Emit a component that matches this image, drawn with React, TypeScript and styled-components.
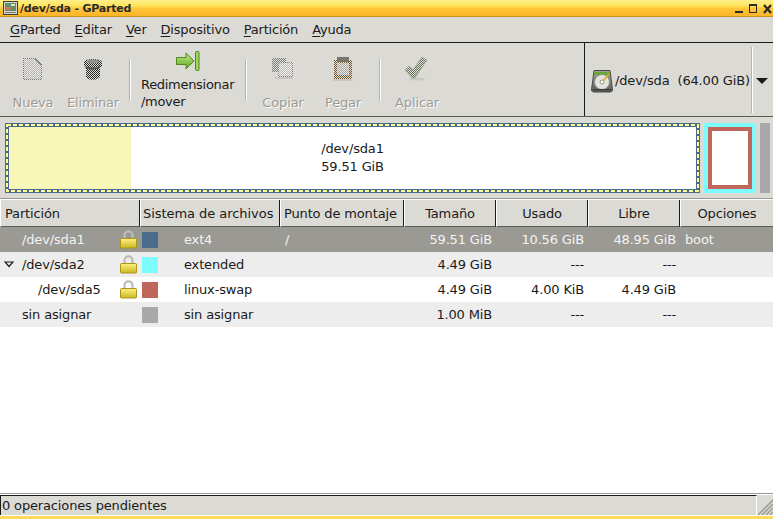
import styled, { createGlobalStyle } from "styled-components"

const Global = createGlobalStyle`
  html, body {
    margin: 0;
    padding: 0;
    background: #fff;
  }
  body {
    font-family: "DejaVu Sans", sans-serif;
    font-size: 13px;
    letter-spacing: -0.15px;
    color: #1a1a1a;
  }
`

const Window = styled.div`
  width: 773px;
  height: 519px;
  display: flex;
  flex-direction: column;
  overflow: hidden;
  background: #fff;
`

const TitleBar = styled.div`
  height: 16px;
  flex: none;
  display: flex;
  align-items: center;
  padding: 0 1px 0 3px;
  background: linear-gradient(#ffef8a 0, #ffe45a 6px, #ffc83c 8px, #fdb52b 15px);
  border-bottom: 1px solid #c89220;
  color: #2a2a2a;
  font-size: 11px;
  letter-spacing: -0.2px;
  font-weight: 700;
`

const TitleText = styled.span`
  margin-left: 2px;
  flex: 1;
`

const WindowButtons = styled.div`
  display: flex;
  align-items: center;
  gap: 5px;
  padding-top: 1px;
`

const MenuBar = styled.div`
  height: 25px;
  flex: none;
  display: flex;
  align-items: center;
  gap: 14px;
  padding: 0 0 0 10px;
  background: #dcdad5;
  border-bottom: 1px solid #1a1a1a;
  box-sizing: content-box;
  letter-spacing: -0.2px;
  u {
    text-underline-offset: 2px;
  }
`

const Toolbar = styled.div`
  height: 73px;
  flex: none;
  display: flex;
  background: #dcdad5;
  border-bottom: 1px solid #5a5a57;
  padding-left: 3px;
`

const Tools = styled.div`
  flex: 1;
  display: flex;
  align-items: stretch;
`

const ToolButton = styled.div<{ $wide?: boolean; $off?: boolean }>`
  width: ${(p) => (p.$wide ? 102 : 60)}px;
  display: flex;
  flex-direction: column;
  align-items: ${(p) => (p.$wide ? "flex-start" : "center")};
  padding: ${(p) => (p.$wide ? "8px 0 0 4px" : "14px 0 0")};
  box-sizing: border-box;
  color: ${(p) => (p.$off ? "#9a9a96" : "#1a1a1a")};
  text-shadow: ${(p) => (p.$off ? "1px 1px 0 #fff" : "none")};
`

const ToolIcon = styled.div<{ $wide?: boolean }>`
  height: 24px;
  margin-left: ${(p) => (p.$wide ? "35px" : "0")};
  flex: none;
`

const ToolLabel = styled.div<{ $wide?: boolean }>`
  margin-top: ${(p) => (p.$wide ? "1px" : "13px")};
  line-height: 17px;
  letter-spacing: ${(p) => (p.$wide ? "-0.3px" : "-0.15px")};
`

const ToolSep = styled.div`
  width: 14px;
  display: flex;
  padding: 16px 0 15px 6px;
  box-sizing: border-box;
  &::before {
    content: "";
    width: 1px;
    background: #b5b3ae;
    box-shadow: 1px 0 0 #fff;
  }
`

const DeviceCombo = styled.div`
  width: 189px;
  flex: none;
  display: flex;
  align-items: center;
  border-left: 1px solid #1a1a1a;
  box-sizing: border-box;
  padding-left: 6px;
  white-space: pre;
`

const DiskWrap = styled.div`
  margin-top: 3px;
  line-height: 0;
`

const DeviceName = styled.span`
  margin: 2px 0 0 2px;
  width: 135px;
`

const DeviceSep = styled.div`
  width: 1px;
  height: 66px;
  background: #b5b3ae;
  box-shadow: 1px 0 0 #fff;
  margin-left: 1px;
`

const ArrowDown = styled.div`
  width: 0;
  height: 0;
  margin: 3px 0 0 4px;
  border-left: 6px solid transparent;
  border-right: 6px solid transparent;
  border-top: 6px solid #1a1a1a;
`

const MapArea = styled.div`
  height: 82px;
  flex: none;
  display: flex;
  gap: 4px;
  padding: 6px 3px 5px 5px;
  box-sizing: border-box;
  background: #dcdad5;
  border-bottom: 1px solid #9a9994;
`

const PrimaryPart = styled.div`
  position: relative;
  width: 695px;
  height: 70px;
  box-sizing: border-box;
  border: 4px solid #4b6b8a;
  background: #fff;
  display: flex;
`

const SelectionDash = styled.svg`
  position: absolute;
  left: -4px;
  top: -4px;
`

const UsedFill = styled.div`
  width: 122px;
  background: #f7f7b8;
`

const PartLabel = styled.div`
  flex: 1;
  display: flex;
  flex-direction: column;
  align-items: center;
  justify-content: center;
  padding-right: 122px;
  line-height: 18px;
`

const ExtendedPart = styled.div`
  width: 52px;
  height: 70px;
  box-sizing: border-box;
  border: 4px solid #7dfcfe;
  display: flex;
`

const SwapPart = styled.div`
  flex: 1;
  border: 4px solid #c1665a;
  background: #fff;
`

const FreePart = styled.div`
  width: 10px;
  height: 70px;
  background: #a9a9a9;
`

const cols = "140px 140px 124px 92px 92px 92px 1fr"

const HeaderRow = styled.div`
  height: 28px;
  flex: none;
  display: grid;
  grid-template-columns: ${cols};
  background: #fff;
  padding-top: 1px;
  box-sizing: border-box;
`

const HeaderCell = styled.div<{ $center?: boolean }>`
  display: flex;
  align-items: center;
  justify-content: ${(p) => (p.$center ? "center" : "flex-start")};
  padding: 0 3px 0 3px;
  background: #dcdad5;
  border-left: 1px solid #fff;
  border-right: 1px solid #1a1a1a;
  border-bottom: 1px solid #5a5a57;
  box-sizing: border-box;
  white-space: nowrap;
  overflow: hidden;
  &:first-child {
    padding-left: 4px;
  }
  &:nth-child(2) {
    padding-left: 2px;
    letter-spacing: -0.05px;
  }
  &:last-child {
    border-right: none;
  }
`

const Rows = styled.div`
  flex: 1;
  background: #fff;
`

const Row = styled.div<{ $tone: "selected" | "odd" | "even" }>`
  height: 25px;
  display: grid;
  grid-template-columns: ${cols};
  align-items: center;
  background: ${(p) =>
    p.$tone === "selected" ? "#9a9994" : p.$tone === "odd" ? "#ededed" : "#fff"};
  color: ${(p) => (p.$tone === "selected" ? "#f4f4f2" : "#1a1a1a")};
`

const NameCell = styled.div<{ $depth?: number }>`
  position: relative;
  display: flex;
  align-items: center;
  height: 25px;
  padding-left: ${(p) => (p.$depth ? 38 : 22)}px;
`

const Expander = styled.div`
  position: absolute;
  left: 4px;
  top: 9px;
  line-height: 0;
`

const LockIcon = styled.div`
  position: absolute;
  left: 120px;
  top: 3px;
  line-height: 0;
`

const FsCell = styled.div`
  display: flex;
  align-items: center;
  padding-left: 2px;
`

const Swatch = styled.div<{ $color: string }>`
  width: 16px;
  height: 16px;
  flex: none;
  background: ${(p) => p.$color};
  margin-right: 26px;
`

const MountCell = styled.div`
  padding-left: 5px;
`

const NumCell = styled.div`
  text-align: right;
  padding-right: 4px;
`

const FlagCell = styled.div`
  padding-left: 5px;
`

const StatusBar = styled.div`
  height: 23px;
  flex: none;
  display: flex;
  background: #fff;
  border-top: 1px solid #9a9994;
  padding-top: 1px;
  box-sizing: border-box;
`

const StatusText = styled.div`
  flex: 1;
  background: #dcdad5;
  border-top: 1px solid #1a1a1a;
  border-left: 1px solid #1a1a1a;
  border-right: 1px solid #fff;
  padding-left: 1px;
  line-height: 19px;
  height: 20px;
  box-sizing: border-box;
`

const Grip = styled.div`
  width: 16px;
  height: 20px;
  background: #dcdad5;
  line-height: 0;
`

const BottomEdge = styled.div`
  height: 3px;
  flex: none;
  background: #ffd95a;
`

const Stipple = ({ id, color }: { id: string; color: string }) => (
  <pattern id={id} width="2" height="2" patternUnits="userSpaceOnUse">
    <rect width="2" height="2" fill="#e4e3df" />
    <rect width="1" height="1" fill={color} />
    <rect x="1" y="1" width="1" height="1" fill={color} />
  </pattern>
)

const NewIcon = () => (
  <svg width="22" height="24" viewBox="0 0 22 24" shapeRendering="crispEdges">
    <defs><Stipple id="st-new" color="#707070" /></defs>
    <path d="M1 1H14L20 7V23H1Z" fill="url(#st-new)" />
    <path d="M2 2H13L19 8V22H2Z" fill="#eeedea" fillOpacity=".55" />
    <path d="M13 2L19 8" stroke="#888" fill="none" />
  </svg>
)

const DeleteIcon = () => (
  <svg width="20" height="24" viewBox="0 0 20 24">
    <defs><Stipple id="st-del" color="#222" /></defs>
    <path d="M1 5C1 1 19 1 19 5V9L17 11V19C17 24 3 24 3 19V11L1 9Z" fill="url(#st-del)" />
    <ellipse cx="10" cy="4.500" rx="6" ry="2" fill="#8f8f8c" />
    <path d="M3 9C6 11 14 11 17 9V11C14 13 6 13 3 11Z" fill="#555" />
  </svg>
)

const CopyIcon = () => (
  <svg width="22" height="24" viewBox="0 0 22 24" shapeRendering="crispEdges">
    <defs><Stipple id="st-copy" color="#777" /></defs>
    <rect x="0" y="1" width="14" height="14" fill="url(#st-copy)" />
    <rect x="6" y="5" width="15" height="15" fill="#dcdad5" />
    <rect x="6" y="5" width="15" height="15" fill="url(#st-copy)" />
    <rect x="7" y="6" width="13" height="13" fill="#f0efec" fillOpacity=".6" />
    <rect x="3" y="20" width="18" height="2" fill="#c9c7c2" />
  </svg>
)

const PasteIcon = () => (
  <svg width="20" height="24" viewBox="0 0 20 24" shapeRendering="crispEdges">
    <defs>
      <Stipple id="st-paste" color="#6e4f24" />
      <Stipple id="st-sheet" color="#a9a9a6" />
    </defs>
    <rect x="1" y="3" width="18" height="19" fill="url(#st-paste)" />
    <rect x="4" y="0" width="12" height="5" fill="#77756f" />
    <rect x="4" y="6" width="12" height="12" fill="url(#st-sheet)" />
    <rect x="0" y="22" width="20" height="2" fill="#c9c7c2" />
  </svg>
)

const ApplyIcon = () => (
  <svg width="24" height="24" viewBox="0 0 24 24">
    <defs><Stipple id="st-apply" color="#5f7050" /></defs>
    <ellipse cx="12" cy="22" rx="8" ry="1.600" fill="#c9c7c2" />
    <path d="M0 13L4 9L8 13L17 0L22 3L10 21H7Z" fill="url(#st-apply)" stroke="#8f9a86" strokeWidth=".6" />
  </svg>
)

const ResizeIcon = () => (
  <svg width="24" height="20" viewBox="0 0 24 20">
    <defs>
      <linearGradient id="g-arrow" x1="0" y1="0" x2="0" y2="1">
        <stop offset="0" stopColor="#c4ec8e" />
        <stop offset="1" stopColor="#5ea31c" />
      </linearGradient>
    </defs>
    <path d="M.5 6.500H10V2L18 10L10 18V13.500H.5Z" fill="url(#g-arrow)" stroke="#4e8a14" />
    <rect x="19.500" y=".5" width="3.500" height="19" rx="1" fill="#9ed45c" stroke="#4e8a14" />
  </svg>
)

const DiskIcon = () => (
  <svg width="22" height="23" viewBox="0 0 22 23">
    <defs>
      <linearGradient id="g-disk" x1="0" y1="0" x2="0" y2="1">
        <stop offset="0" stopColor="#a5a5a0" />
        <stop offset="1" stopColor="#5e5e5a" />
      </linearGradient>
    </defs>
    <path d="M3 .5H19L21.500 20Q21.500 22 19 22H3Q.5 22 .5 20Z" fill="url(#g-disk)" stroke="#4a4a47" />
    <rect x="3" y="2" width="16" height="3" fill="#6aa83a" />
    <circle cx="11" cy="12" r="7.500" fill="#e4e4de" stroke="#8f8f8a" />
    <circle cx="11" cy="12" r="2" fill="#fff" stroke="#777" strokeWidth=".8" />
    <path d="M12 11L18 4" stroke="#e0b020" strokeWidth="1.600" />
    <rect x="2" y="19" width="18" height="1.500" fill="#3e3e3c" />
  </svg>
)

const AppIcon = () => (
  <svg width="15" height="14" viewBox="0 0 15 14" shapeRendering="crispEdges">
    <rect x=".5" y=".5" width="14" height="13" rx="1" fill="#d5d4cf" stroke="#3e3e3c" />
    <rect x="2" y="2" width="11" height="8" fill="#5f8f6b" />
    <rect x="3" y="6" width="5" height="3" fill="#cc7a55" />
    <rect x="8" y="3" width="4" height="2" fill="#dfe3c9" />
    <rect x="2" y="11" width="11" height="1" fill="#7a7a76" />
  </svg>
)

const MinIcon = () => (
  <svg width="9" height="10" viewBox="0 0 9 10" shapeRendering="crispEdges">
    <rect x="0" y="7" width="8" height="2" fill="#2a2a2a" />
  </svg>
)

const MaxIcon = () => (
  <svg width="9" height="10" viewBox="0 0 9 10" shapeRendering="crispEdges">
    <rect x=".5" y=".5" width="7" height="8" fill="none" stroke="#2a2a2a" />
    <rect x="0" y="0" width="8" height="2" fill="#2a2a2a" />
  </svg>
)

const CloseIcon = () => (
  <svg width="9" height="10" viewBox="0 0 9 10">
    <path d="M1 1L8 9M8 1L1 9" stroke="#2a2a2a" strokeWidth="2.200" />
  </svg>
)

const Lock = ({ id }: { id: string }) => (
  <svg width="17" height="19" viewBox="0 0 17 19">
    <defs>
      <linearGradient id={id} x1="0" y1="0" x2="0" y2="1">
        <stop offset="0" stopColor="#fdf27e" />
        <stop offset="1" stopColor="#cdb620" />
      </linearGradient>
    </defs>
    <path d="M4.500 9V5.500C4.500 0 12.500 0 12.500 5.500V9" fill="none" stroke="#bcbcb8" strokeWidth="2.200" />
    <rect x=".5" y="8.500" width="16" height="9.500" rx="1" fill={`url(#${id})`} stroke="#a8951a" />
  </svg>
)

const rows = [
  { name: "/dev/sda1", tone: "selected", lock: true, color: "#4b6b8a", fs: "ext4", mount: "/", size: "59.51 GiB", used: "10.56 GiB", free: "48.95 GiB", flags: "boot" },
  { name: "/dev/sda2", tone: "odd", lock: true, expand: true, color: "#7dfcfe", fs: "extended", mount: "", size: "4.49 GiB", used: "---", free: "---", flags: "" },
  { name: "/dev/sda5", tone: "even", lock: true, depth: 1, color: "#c1665a", fs: "linux-swap", mount: "", size: "4.49 GiB", used: "4.00 KiB", free: "4.49 GiB", flags: "" },
  { name: "sin asignar", tone: "odd", color: "#a9a9a9", fs: "sin asignar", mount: "", size: "1.00 MiB", used: "---", free: "---", flags: "" },
] as const

export default function App() {
  return (
    <Window>
      <Global />
      <TitleBar>
        <AppIcon />
        <TitleText>/dev/sda - GParted</TitleText>
        <WindowButtons>
          <MinIcon />
          <MaxIcon />
          <CloseIcon />
        </WindowButtons>
      </TitleBar>
      <MenuBar>
        <span><u>G</u>Parted</span>
        <span><u>E</u>ditar</span>
        <span><u>V</u>er</span>
        <span><u>D</u>ispositivo</span>
        <span><u>P</u>artición</span>
        <span><u>A</u>yuda</span>
      </MenuBar>
      <Toolbar>
        <Tools>
          <ToolButton $off>
            <ToolIcon><NewIcon /></ToolIcon>
            <ToolLabel>Nueva</ToolLabel>
          </ToolButton>
          <ToolButton $off>
            <ToolIcon><DeleteIcon /></ToolIcon>
            <ToolLabel>Eliminar</ToolLabel>
          </ToolButton>
          <ToolSep />
          <ToolButton $wide>
            <ToolIcon $wide><ResizeIcon /></ToolIcon>
            <ToolLabel $wide>Redimensionar<br />/mover</ToolLabel>
          </ToolButton>
          <ToolSep />
          <ToolButton $off>
            <ToolIcon><CopyIcon /></ToolIcon>
            <ToolLabel>Copiar</ToolLabel>
          </ToolButton>
          <ToolButton $off>
            <ToolIcon><PasteIcon /></ToolIcon>
            <ToolLabel>Pegar</ToolLabel>
          </ToolButton>
          <ToolSep />
          <ToolButton $off>
            <ToolIcon><ApplyIcon /></ToolIcon>
            <ToolLabel>Aplicar</ToolLabel>
          </ToolButton>
        </Tools>
        <DeviceCombo>
          <DiskWrap><DiskIcon /></DiskWrap>
          <DeviceName>/dev/sda  (64.00 GiB)</DeviceName>
          <DeviceSep />
          <ArrowDown />
        </DeviceCombo>
      </Toolbar>
      <MapArea>
        <PrimaryPart>
          <UsedFill />
          <PartLabel>
            <span>/dev/sda1</span>
            <span>59.51 GiB</span>
          </PartLabel>
          <SelectionDash width="695" height="70">
            <rect x="2" y="2" width="691" height="66" fill="none" stroke="#ffff99" strokeWidth="2" strokeDasharray="4 2" />
          </SelectionDash>
        </PrimaryPart>
        <ExtendedPart>
          <SwapPart />
        </ExtendedPart>
        <FreePart />
      </MapArea>
      <HeaderRow>
        <HeaderCell>Partición</HeaderCell>
        <HeaderCell>Sistema de archivos</HeaderCell>
        <HeaderCell>Punto de montaje</HeaderCell>
        <HeaderCell $center>Tamaño</HeaderCell>
        <HeaderCell $center>Usado</HeaderCell>
        <HeaderCell $center>Libre</HeaderCell>
        <HeaderCell $center>Opciones</HeaderCell>
      </HeaderRow>
      <Rows>
        {rows.map((r, i) => (
          <Row key={i} $tone={r.tone}>
            <NameCell $depth={"depth" in r ? r.depth : 0}>
              {"expand" in r && (
                <Expander>
                  <svg width="10" height="7" viewBox="0 0 10 7">
                    <path d="M1 1H9L5 5.500Z" fill="none" stroke="#1a1a1a" strokeWidth="1.200" />
                  </svg>
                </Expander>
              )}
              {r.name}
              {"lock" in r && <LockIcon><Lock id={`lock-${i}`} /></LockIcon>}
            </NameCell>
            <FsCell>
              <Swatch $color={r.color} />
              {r.fs}
            </FsCell>
            <MountCell>{r.mount}</MountCell>
            <NumCell>{r.size}</NumCell>
            <NumCell>{r.used}</NumCell>
            <NumCell>{r.free}</NumCell>
            <FlagCell>{r.flags}</FlagCell>
          </Row>
        ))}
      </Rows>
      <StatusBar>
        <StatusText>0 operaciones pendientes</StatusText>
        <Grip>
          <svg width="16" height="20" viewBox="0 0 16 20">
            <path d="M1 20L16 5M5 20L16 9M9 20L16 13M13 20L16 17" stroke="#9a9994" strokeWidth="1.500" />
          </svg>
        </Grip>
      </StatusBar>
      <BottomEdge />
    </Window>
  )
}
